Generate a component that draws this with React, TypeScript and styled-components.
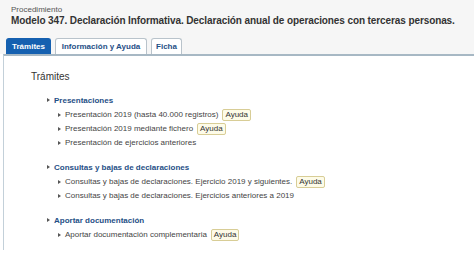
import React from "react";
import styled, { createGlobalStyle } from "styled-components";

const GlobalStyle = createGlobalStyle`
  body {
    margin: 0;
    background: #ffffff;
    font-family: "Liberation Sans", Arial, sans-serif;
  }
`;

const Page = styled.div`
  width: 474px;
  height: 259px;
  overflow: hidden;
  background: #ffffff;
`;

const Header = styled.header`
  background: #f6f6f6;
  padding: 5px 0 0 11px;
`;

const Kicker = styled.div`
  font-size: 8px;
  color: #555;
  line-height: 10px;
`;

const Title = styled.h1`
  margin: 0;
  font-size: 10px;
  font-weight: 700;
  letter-spacing: -0.1px;
  color: #333;
  line-height: 12px;
  white-space: nowrap;
`;

const Tabs = styled.nav`
  display: flex;
  gap: 4px;
  margin: 11px 0 0 -5px;
`;

const Tab = styled.a<{ $active?: boolean; $w: number }>`
  display: flex;
  align-items: center;
  justify-content: center;
  width: ${(p) => p.$w}px;
  height: 16px;
  box-sizing: border-box;
  font-size: 8px;
  font-weight: 700;
  border: 1px solid ${(p) => (p.$active ? "#1560b0" : "#b9c3cb")};
  border-bottom: none;
  border-radius: 3px 3px 0 0;
  background: ${(p) => (p.$active ? "#1560b0" : "#ffffff")};
  color: ${(p) => (p.$active ? "#ffffff" : "#1f4f86")};
`;

const Panel = styled.section`
  margin-left: 3px;
  border-top: 2px solid #a7b8c4;
  border-left: 1px solid #c3d0d9;
  padding: 14px 0 0 27px;
  height: 196px;
  box-sizing: border-box;
`;

const PanelTitle = styled.h2`
  margin: 0 0 10px;
  font-size: 10px;
  font-weight: 400;
  color: #333;
  line-height: 14px;
`;

const Group = styled.div`
  padding-left: 16px;
  margin-bottom: 11px;
`;

const Marker = styled.span`
  display: inline-block;
  width: 0;
  height: 0;
  border-left: 3px solid #555;
  border-top: 2.5px solid transparent;
  border-bottom: 2.5px solid transparent;
  margin-right: 4px;
  vertical-align: 1px;
`;

const GroupTitle = styled.div`
  font-size: 8px;
  font-weight: 700;
  color: #1f4f86;
  line-height: 14px;
`;

const Item = styled.div`
  display: flex;
  align-items: center;
  padding-left: 11px;
  font-size: 8px;
  color: #444;
  line-height: 14px;
  white-space: nowrap;
`;

const Badge = styled.span`
  margin-left: 4px;
  padding: 0 2px;
  line-height: 10px;
  font-size: 8px;
  color: #333;
  background: #fdfbe8;
  border: 1px solid #d8cd96;
  border-radius: 2px;
`;

type Entry = { text: string; help?: boolean };

const groups: { title: string; items: Entry[] }[] = [
  {
    title: "Presentaciones",
    items: [
      { text: "Presentación 2019 (hasta 40.000 registros)", help: true },
      { text: "Presentación 2019 mediante fichero", help: true },
      { text: "Presentación de ejercicios anteriores" },
    ],
  },
  {
    title: "Consultas y bajas de declaraciones",
    items: [
      { text: "Consultas y bajas de declaraciones. Ejercicio 2019 y siguientes.", help: true },
      { text: "Consultas y bajas de declaraciones. Ejercicios anteriores a 2019" },
    ],
  },
  {
    title: "Aportar documentación",
    items: [{ text: "Aportar documentación complementaria", help: true }],
  },
];

export default function App() {
  return (
    <Page>
      <GlobalStyle />
      <Header>
        <Kicker>Procedimiento</Kicker>
        <Title>
          Modelo 347. Declaración Informativa. Declaración anual de operaciones con terceras personas.
        </Title>
        <Tabs>
          <Tab $active $w={45}>Trámites</Tab>
          <Tab $w={92}>Información y Ayuda</Tab>
          <Tab $w={31}>Ficha</Tab>
        </Tabs>
      </Header>
      <Panel>
        <PanelTitle>Trámites</PanelTitle>
        {groups.map((g) => (
          <Group key={g.title}>
            <GroupTitle>
              <Marker />
              {g.title}
            </GroupTitle>
            {g.items.map((it) => (
              <Item key={it.text}>
                <Marker />
                {it.text}
                {it.help && <Badge>Ayuda</Badge>}
              </Item>
            ))}
          </Group>
        ))}
      </Panel>
    </Page>
  );
}
